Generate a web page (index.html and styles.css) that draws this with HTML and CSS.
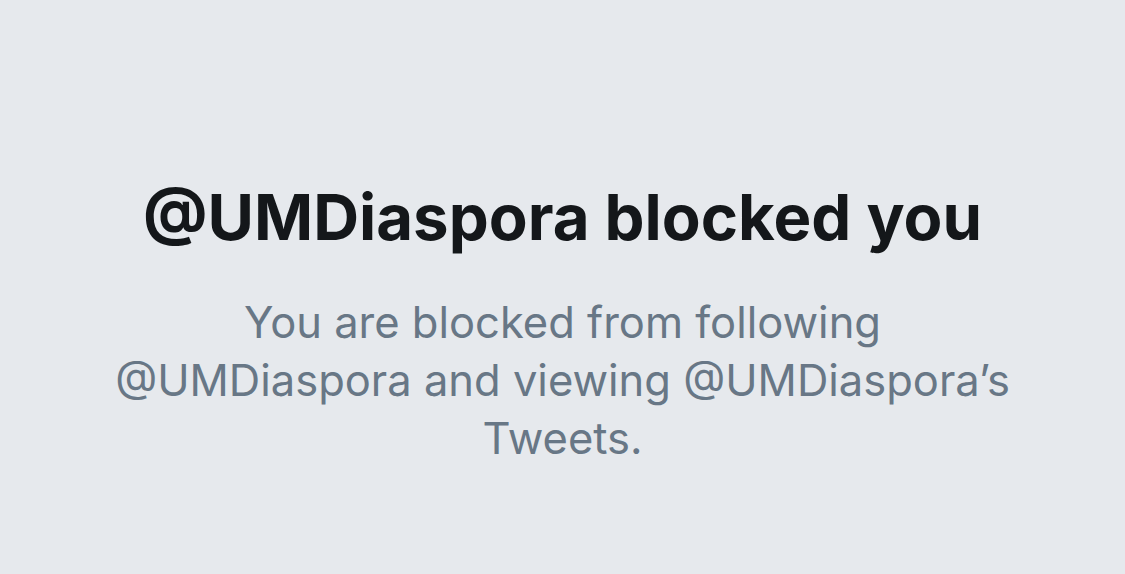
FILE: index.html
```html
<!DOCTYPE html>
<html>
<head>
<meta charset="UTF-8">
<title>@UMDiaspora blocked you</title>
<link rel="stylesheet" href="styles.css">
</head>
<body>
<div class="blocked">
  <h1 class="blocked-title">@UMDiaspora blocked you</h1>
  <p class="blocked-text">You are blocked from following @UMDiaspora and viewing @UMDiaspora’s Tweets.</p>
</div>
</body>
</html>
```

FILE: styles.css
```css
html, body { margin:0; padding:0; height:100%; }
body { background:#e6e9ed; font-family:Inter, "Noto Sans", sans-serif; }
.blocked { display:flex; flex-direction:column; align-items:center; padding:179px 60px 0; text-align:center; }
.blocked-title { margin:0; font-size:63.5px; line-height:76px; font-weight:700; color:#14171a; }
.blocked-text { margin:38px 0 0; max-width:920px; font-size:43.5px; line-height:58px; font-weight:400; color:#687786; }
```
